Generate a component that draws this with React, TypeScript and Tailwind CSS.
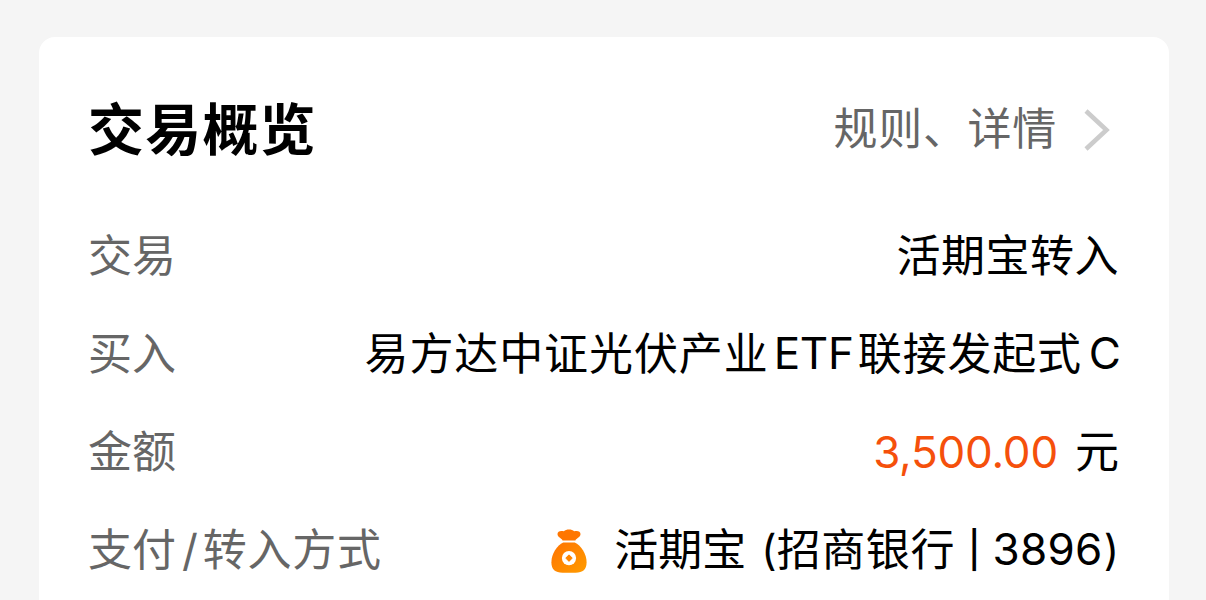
import React from 'react';

function Row({ label, children }: { label: React.ReactNode; children: React.ReactNode }) {
  return (
    <div className="flex h-[98px] items-center justify-between whitespace-nowrap">
      <span className="-ml-px flex items-center text-[#666]">{label}</span>
      <span className="flex items-center text-black">{children}</span>
    </div>
  );
}

function MoneyBag() {
  return (
    <svg className="mr-[27px] mt-[2px] shrink-0" width="36" height="44" viewBox="0 0 106 130">
      <defs>
        <linearGradient id="bag" x1="0" y1="0" x2="1" y2="1">
          <stop offset="0" stopColor="#ff7200" />
          <stop offset="1" stopColor="#ff9c00" />
        </linearGradient>
      </defs>
      <path fill="#ff7600" d="M34 34 C31 27 19 25 19 15 C19 6 29 4 38 7 C44 0 62 0 68 7 C77 4 87 6 87 15 C87 25 75 27 72 34 Z" />
      <path fill="url(#bag)" d="M36 40 H70 C88 48 105 73 105 98 C105 119 94 129 72 129 H34 C12 129 1 119 1 98 C1 73 18 48 36 40 Z" />
      <circle cx="53" cy="86" r="21" fill="#fff" />
      <path d="M53 77 L62 86 L53 95 L44 86 Z" fill="#ff8500" stroke="#ff8500" strokeWidth="3" strokeLinejoin="round" />
    </svg>
  );
}

export default function App() {
  return (
    <main className="h-[600px] w-[1206px] overflow-hidden bg-[#f5f5f5] px-[39px] pt-[37px] font-['Inter','Noto_Sans_CJK_SC',sans-serif] text-[44px]">
      <section className="h-[700px] w-[1130px] rounded-[16px] bg-white px-[50px] pt-[44px]">
        <header className="flex h-[98px] items-center justify-between">
          <h1 className="-ml-px text-[56px] font-bold leading-none tracking-[1.2px] text-black">交易概览</h1>
          <div className="flex items-center text-[#666]">
            <span className="-mt-[3px] tracking-[0.7px]">规则、详情</span>
            <svg className="ml-[26px] mr-[8px]" width="28" height="44" viewBox="0 0 28 44" fill="none" stroke="#ccc" strokeWidth="4.5">
              <path d="M3 3 L23.5 22 L3 41" />
            </svg>
          </div>
        </header>
        <div className="pt-[28px]">
          <Row label="交易">
            <span className="tracking-[0.5px]">活期宝转入</span>
          </Row>
          <Row label="买入">
            <span className="tracking-[0.9px]">易方达中证光伏产业</span>
            <span className="-mt-[2px] ml-[5px] tracking-[-0.2px]">ETF</span>
            <span className="ml-[4px] tracking-[0.8px]">联接发起式</span>
            <span className="-mr-[2px] -mt-[2px] ml-[7px]">C</span>
          </Row>
          <Row label="金额">
            <span className="-mt-px mr-[17px] tracking-[-0.2px] text-[#f5500b]">3,500.00</span>
            <span>元</span>
          </Row>
          <Row
            label={
              <>
                <span>支付</span>
                <span className="ml-[6px] mr-[5px]">/</span>
                <span className="tracking-[0.7px]">转入方式</span>
              </>
            }
          >
            <MoneyBag />
            <span>活期宝</span>
            <span className="-mt-[2px] ml-[15px] text-[42px]">(</span>
            <span className="tracking-[0.6px]">招商银行</span>
            <span className="ml-[13px] mr-[12px] text-[36px] font-medium">|</span>
            <span className="-mt-[2px] tracking-[0.3px]">3896</span>
            <span className="-mt-[2px] ml-px text-[42px]">)</span>
          </Row>
        </div>
      </section>
    </main>
  );
}
